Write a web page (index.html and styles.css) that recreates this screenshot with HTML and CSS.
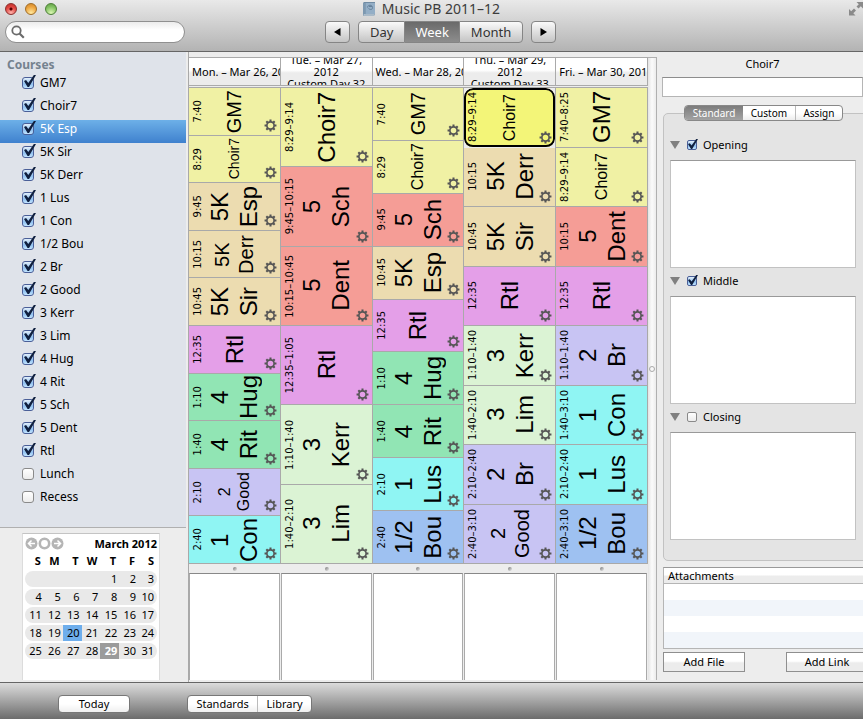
FILE: index.html
```html
<!DOCTYPE html>
<html lang="en">
<head>
<meta charset="utf-8">
<title>Music PB 2011-12</title>
<link rel="stylesheet" href="styles.css">
</head>
<body>
<svg class="defs" aria-hidden="true">
  <symbol id="gear" viewBox="0 0 14 14">
    <g fill="none" stroke="#555">
      <circle cx="7" cy="7" r="3.9" stroke-width="1.8"/>
      <path stroke-width="2.2" d="M7 .6V3M7 11v2.4M.6 7H3M11 7h2.4M2.500 2.500l1.600 1.600M9.900 9.900l1.600 1.600M2.500 11.500l1.600-1.600M9.900 4.100l1.600-1.600"/>
    </g>
  </symbol>
</svg>

<header class="titlebar">
  <div class="title-row">
    <div class="lights">
      <button class="light red" aria-label="Close"></button>
      <button class="light amber" aria-label="Minimize"></button>
      <button class="light green" aria-label="Zoom"></button>
    </div>
    <h1 class="title">
      <svg width="13" height="14" viewBox="0 0 13 14" aria-hidden="true">
        <path fill="#6f8ba3" d="M1 0h11v12l-1 2H0V1z"/>
        <path fill="#93aec6" d="M2.500 1H12v11H2.500z"/>
        <path fill="#7d98b0" d="M0 1h2v12H0z"/>
        <path fill="none" stroke="#64809a" d="M4.500 5.500c0-3 5-3 5 0s-3 2-4 1M6 4.500h3"/>
        <path fill="#e4e9ee" d="M1 12.500h10.500l-.5 1H0z"/>
      </svg>
      Music PB 2011–12
    </h1>
    <button class="fullscreen" aria-label="Full screen">
      <svg width="14" height="15" viewBox="0 0 14 15"><path fill="#8a8a8a" d="M0 14.500V8l2.200 2.200L5 7.500 7 9.500l-2.700 2.700L6.500 14.500zM14 1v6.500l-2.200-2.200L9.500 7.500l-2-2 2.300-2.300L7.500 1z"/></svg>
    </button>
  </div>
  <div class="toolbar">
    <label class="search">
      <svg width="14" height="14" viewBox="0 0 14 14" aria-hidden="true"><circle cx="5.500" cy="5.500" r="4.200" fill="none" stroke="#6b6b6b" stroke-width="1.800"/><path d="M8.500 8.500l4.300 4.300" stroke="#6b6b6b" stroke-width="2.200"/></svg>
      <input type="search" aria-label="Search">
    </label>
    <nav class="nav">
      <button class="tool arrow" aria-label="Previous"><svg width="7" height="8" viewBox="0 0 7 8"><path d="M6.500 0v8L0 4z"/></svg></button>
      <div class="segments">
        <button class="tool">Day</button><button class="tool on">Week</button><button class="tool">Month</button>
      </div>
      <button class="tool arrow" aria-label="Next"><svg width="7" height="8" viewBox="0 0 7 8"><path d="M.5 0v8L7 4z"/></svg></button>
    </nav>
  </div>
</header>

<main class="main">
  <aside class="sidebar">
    <section class="courses">
      <h2>Courses</h2>
      <ul>
        <li><label><input type="checkbox" checked>GM7</label></li>
        <li><label><input type="checkbox" checked>Choir7</label></li>
        <li class="current"><label><input type="checkbox" checked>5K Esp</label></li>
        <li><label><input type="checkbox" checked>5K Sir</label></li>
        <li><label><input type="checkbox" checked>5K Derr</label></li>
        <li><label><input type="checkbox" checked>1 Lus</label></li>
        <li><label><input type="checkbox" checked>1 Con</label></li>
        <li><label><input type="checkbox" checked>1/2 Bou</label></li>
        <li><label><input type="checkbox" checked>2 Br</label></li>
        <li><label><input type="checkbox" checked>2 Good</label></li>
        <li><label><input type="checkbox" checked>3 Kerr</label></li>
        <li><label><input type="checkbox" checked>3 Lim</label></li>
        <li><label><input type="checkbox" checked>4 Hug</label></li>
        <li><label><input type="checkbox" checked>4 Rit</label></li>
        <li><label><input type="checkbox" checked>5 Sch</label></li>
        <li><label><input type="checkbox" checked>5 Dent</label></li>
        <li><label><input type="checkbox" checked>Rtl</label></li>
        <li><label><input type="checkbox">Lunch</label></li>
        <li><label><input type="checkbox">Recess</label></li>
      </ul>
    </section>
    <section class="mini">
      <div class="mini-head">
        <div class="mini-nav">
          <button aria-label="Previous month"><svg width="13" height="13" viewBox="0 0 13 13"><circle cx="6.500" cy="6.500" r="6" fill="#b5b5b5"/><path d="M10 6.500H4M6.500 3.500l-3 3 3 3" fill="none" stroke="#fff" stroke-width="1.500"/></svg></button>
          <button aria-label="Current month"><svg width="13" height="13" viewBox="0 0 13 13"><circle cx="6.500" cy="6.500" r="4.700" fill="#fff" stroke="#b5b5b5" stroke-width="2.600"/></svg></button>
          <button aria-label="Next month"><svg width="13" height="13" viewBox="0 0 13 13"><circle cx="6.500" cy="6.500" r="6" fill="#b5b5b5"/><path d="M3 6.500h6M6.500 3.500l3 3-3 3" fill="none" stroke="#fff" stroke-width="1.500"/></svg></button>
        </div>
        <strong>March 2012</strong>
      </div>
      <table>
        <thead><tr><th>S</th><th>M</th><th>T</th><th>W</th><th>T</th><th>F</th><th>S</th></tr></thead>
        <tbody>
          <tr><td></td><td></td><td></td><td></td><td>1</td><td>2</td><td>3</td></tr>
          <tr><td>4</td><td>5</td><td>6</td><td>7</td><td>8</td><td>9</td><td>10</td></tr>
          <tr><td>11</td><td>12</td><td>13</td><td>14</td><td>15</td><td>16</td><td>17</td></tr>
          <tr><td>18</td><td>19</td><td class="today">20</td><td>21</td><td>22</td><td>23</td><td>24</td></tr>
          <tr><td>25</td><td>26</td><td>27</td><td>28</td><td class="picked">29</td><td>30</td><td>31</td></tr>
        </tbody>
      </table>
    </section>
  </aside>

  <section class="week">
    <div class="day">
      <h3>Mon. – Mar 26, 2012</h3>
      <div class="events">
        <article class="event yellow"><time>7:40</time><p class="md">GM7</p><button aria-label="Options"><svg><use href="#gear"/></svg></button></article>
        <article class="event yellow"><time>8:29</time><p class="xs">Choir7</p><button aria-label="Options"><svg><use href="#gear"/></svg></button></article>
        <article class="event tan"><time>9:45</time><p>5K<br>Esp</p><button aria-label="Options"><svg><use href="#gear"/></svg></button></article>
        <article class="event tan"><time>10:15</time><p class="md">5K<br>Derr</p><button aria-label="Options"><svg><use href="#gear"/></svg></button></article>
        <article class="event tan"><time>10:45</time><p>5K<br>Sir</p><button aria-label="Options"><svg><use href="#gear"/></svg></button></article>
        <article class="event purple"><time>12:35</time><p>Rtl</p><button aria-label="Options"><svg><use href="#gear"/></svg></button></article>
        <article class="event green"><time>1:10</time><p>4<br>Hug</p><button aria-label="Options"><svg><use href="#gear"/></svg></button></article>
        <article class="event green"><time>1:40</time><p>4<br>Rit</p><button aria-label="Options"><svg><use href="#gear"/></svg></button></article>
        <article class="event lavender"><time>2:10</time><p class="sm">2<br>Good</p><button aria-label="Options"><svg><use href="#gear"/></svg></button></article>
        <article class="event cyan"><time>2:40</time><p>1<br>Con</p><button aria-label="Options"><svg><use href="#gear"/></svg></button></article>
      </div>
      <div class="grip"></div>
      <div class="notes"></div>
    </div>
    <div class="day">
      <h3 class="wrap">Tue. – Mar 27,<br>2012<br>Custom Day 32</h3>
      <div class="events">
        <article class="event yellow"><time>8:29–9:14</time><p>Choir7</p><button aria-label="Options"><svg><use href="#gear"/></svg></button></article>
        <article class="event red"><time>9:45–10:15</time><p>5<br>Sch</p><button aria-label="Options"><svg><use href="#gear"/></svg></button></article>
        <article class="event red"><time>10:15–10:45</time><p>5<br>Dent</p><button aria-label="Options"><svg><use href="#gear"/></svg></button></article>
        <article class="event purple"><time>12:35–1:05</time><p>Rtl</p><button aria-label="Options"><svg><use href="#gear"/></svg></button></article>
        <article class="event mint"><time>1:10–1:40</time><p>3<br>Kerr</p><button aria-label="Options"><svg><use href="#gear"/></svg></button></article>
        <article class="event mint"><time>1:40–2:10</time><p>3<br>Lim</p><button aria-label="Options"><svg><use href="#gear"/></svg></button></article>
      </div>
      <div class="grip"></div>
      <div class="notes"></div>
    </div>
    <div class="day">
      <h3>Wed. – Mar 28, 2012</h3>
      <div class="events">
        <article class="event yellow"><time>7:40</time><p class="md">GM7</p><button aria-label="Options"><svg><use href="#gear"/></svg></button></article>
        <article class="event yellow"><time>8:29</time><p class="sm">Choir7</p><button aria-label="Options"><svg><use href="#gear"/></svg></button></article>
        <article class="event red"><time>9:45</time><p>5<br>Sch</p><button aria-label="Options"><svg><use href="#gear"/></svg></button></article>
        <article class="event tan"><time>10:45</time><p>5K<br>Esp</p><button aria-label="Options"><svg><use href="#gear"/></svg></button></article>
        <article class="event purple"><time>12:35</time><p>Rtl</p><button aria-label="Options"><svg><use href="#gear"/></svg></button></article>
        <article class="event green"><time>1:10</time><p>4<br>Hug</p><button aria-label="Options"><svg><use href="#gear"/></svg></button></article>
        <article class="event green"><time>1:40</time><p>4<br>Rit</p><button aria-label="Options"><svg><use href="#gear"/></svg></button></article>
        <article class="event cyan"><time>2:10</time><p>1<br>Lus</p><button aria-label="Options"><svg><use href="#gear"/></svg></button></article>
        <article class="event blue"><time>2:40</time><p>1/2<br>Bou</p><button aria-label="Options"><svg><use href="#gear"/></svg></button></article>
      </div>
      <div class="grip"></div>
      <div class="notes"></div>
    </div>
    <div class="day">
      <h3 class="wrap">Thu. – Mar 29,<br>2012<br>Custom Day 33</h3>
      <div class="events">
        <article class="event yellow selected"><time>8:29–9:14</time><p class="sm">Choir7</p><button aria-label="Options"><svg><use href="#gear"/></svg></button></article>
        <article class="event tan"><time>10:15</time><p>5K<br>Derr</p><button aria-label="Options"><svg><use href="#gear"/></svg></button></article>
        <article class="event tan"><time>10:45</time><p>5K<br>Sir</p><button aria-label="Options"><svg><use href="#gear"/></svg></button></article>
        <article class="event purple"><time>12:35</time><p>Rtl</p><button aria-label="Options"><svg><use href="#gear"/></svg></button></article>
        <article class="event mint"><time>1:10–1:40</time><p>3<br>Kerr</p><button aria-label="Options"><svg><use href="#gear"/></svg></button></article>
        <article class="event mint"><time>1:40–2:10</time><p>3<br>Lim</p><button aria-label="Options"><svg><use href="#gear"/></svg></button></article>
        <article class="event lavender"><time>2:10–2:40</time><p>2<br>Br</p><button aria-label="Options"><svg><use href="#gear"/></svg></button></article>
        <article class="event lavender"><time>2:40–3:10</time><p class="md">2<br>Good</p><button aria-label="Options"><svg><use href="#gear"/></svg></button></article>
      </div>
      <div class="grip"></div>
      <div class="notes"></div>
    </div>
    <div class="day">
      <h3>Fri. – Mar 30, 2012</h3>
      <div class="events">
        <article class="event yellow"><time>7:40–8:25</time><p>GM7</p><button aria-label="Options"><svg><use href="#gear"/></svg></button></article>
        <article class="event yellow"><time>8:29–9:14</time><p class="sm">Choir7</p><button aria-label="Options"><svg><use href="#gear"/></svg></button></article>
        <article class="event red"><time>10:15</time><p>5<br>Dent</p><button aria-label="Options"><svg><use href="#gear"/></svg></button></article>
        <article class="event purple"><time>12:35</time><p>Rtl</p><button aria-label="Options"><svg><use href="#gear"/></svg></button></article>
        <article class="event lavender"><time>1:10–1:40</time><p>2<br>Br</p><button aria-label="Options"><svg><use href="#gear"/></svg></button></article>
        <article class="event cyan"><time>1:40–3:10</time><p>1<br>Con</p><button aria-label="Options"><svg><use href="#gear"/></svg></button></article>
        <article class="event cyan"><time>2:10–2:40</time><p>1<br>Lus</p><button aria-label="Options"><svg><use href="#gear"/></svg></button></article>
        <article class="event blue"><time>2:40–3:10</time><p>1/2<br>Bou</p><button aria-label="Options"><svg><use href="#gear"/></svg></button></article>
      </div>
      <div class="grip"></div>
      <div class="notes"></div>
    </div>
  </section>

  <div class="splitter"></div>

  <aside class="inspector">
    <h2>Choir7</h2>
    <input class="field" type="text" aria-label="Lesson title">
    <section class="group">
      <div class="tabs">
        <button class="on">Standard</button><button>Custom</button><button>Assign</button>
      </div>
      <div class="part">
        <div class="part-head"><span class="tri"></span><label><input type="checkbox" checked>Opening</label></div>
        <textarea aria-label="Opening text"></textarea>
      </div>
      <div class="part">
        <div class="part-head"><span class="tri"></span><label><input type="checkbox" checked>Middle</label></div>
        <textarea aria-label="Middle text"></textarea>
      </div>
      <div class="part">
        <div class="part-head"><span class="tri"></span><label><input type="checkbox">Closing</label></div>
        <textarea aria-label="Closing text"></textarea>
      </div>
    </section>
    <table class="attachments">
      <thead><tr><th>Attachments</th></tr></thead>
      <tbody><tr><td></td></tr><tr><td></td></tr><tr><td></td></tr><tr><td></td></tr></tbody>
    </table>
    <div class="actions"><button>Add File</button><button>Add Link</button></div>
  </aside>
</main>

<footer class="bottombar">
  <button class="pill">Today</button>
  <div class="pair"><button>Standards</button><button>Library</button></div>
</footer>
</body>
</html>
```

FILE: styles.css
```css
* { box-sizing: border-box; }

html, body { height: 100%; }

body {
  margin: 0;
  display: flex;
  flex-direction: column;
  overflow: hidden;
  background: #ededed;
  color: #000;
  font: 12px/16px "Noto Sans", "Open Sans", sans-serif;
}

h1, h2, h3, p, ul { margin: 0; padding: 0; font-weight: 400; }
ul { list-style: none; }
button, input, textarea { font: inherit; color: inherit; margin: 0; }
button { padding: 0; border: 0; background: none; }
svg { display: block; }
.defs { position: absolute; width: 0; height: 0; }

/* Title bar */
.titlebar {
  flex: none;
  padding-bottom: 8px;
  border-bottom: 1px solid #666;
  background: linear-gradient(#e9e9e9, #b3b3b3);
}
.title-row {
  display: grid;
  grid-template-columns: 1fr auto 1fr;
  align-items: center;
  height: 21px;
  padding-bottom: 4px;
}
.lights { display: flex; gap: 8px; padding-left: 5px; }
.light {
  width: 12px;
  height: 12px;
  border: 1px solid #7b5a55;
  border-radius: 50%;
}
.light.red { border-color: #8c2f2c; background: radial-gradient(circle at 50% 50%, #5c0000 0 1px, transparent 2px), radial-gradient(circle at 50% 90%, #ffb3ac, #e0443e 60%, #b8302c); }
.light.amber { border-color: #a06c25; background: radial-gradient(circle at 50% 90%, #ffeaa0, #eda43f 60%, #cf862a); }
.light.green { border-color: #4c7f37; background: radial-gradient(circle at 50% 90%, #dcf7b4, #83c263 60%, #5f9c43); }
.title {
  display: flex;
  align-items: center;
  gap: 6px;
  color: #3c3c3c;
  font-size: 14px;
  line-height: 17px;
}
.fullscreen { justify-self: end; }

.toolbar { display: flex; align-items: center; padding-left: 5px; }
.search {
  display: flex;
  align-items: center;
  width: 180px;
  height: 22px;
  padding: 0 8px 0 5px;
  border: 1px solid #909090;
  border-radius: 11px;
  background: linear-gradient(#ececec, #fff 40%);
}
.search input { flex: 1; min-width: 0; border: 0; outline: 0; background: none; }
.nav { display: flex; gap: 8px; margin-left: 140px; }
.segments { display: flex; }
.tool {
  height: 22px;
  padding: 0 11px;
  border: 1px solid #858585;
  background: linear-gradient(#fafafa, #c4c4c4);
  color: #333;
  font-size: 13px;
  line-height: 20px;
}
.arrow { display: grid; place-items: center; width: 25px; padding: 0; border-radius: 4px; }
.segments .tool:first-child { border-radius: 4px 0 0 4px; }
.segments .tool:last-child { border-radius: 0 4px 4px 0; }
.segments .on {
  padding: 0 10px;
  border-width: 1px 0;
  background: linear-gradient(#6a6a6a, #8d8d8d);
  color: #fff;
}

.main { flex: 1; display: flex; min-height: 0; }

/* Check boxes */
input[type="checkbox"] {
  appearance: none;
  flex: none;
  position: relative;
  width: 12px;
  height: 12px;
  border: 1px solid #8a8a8a;
  border-radius: 3px;
  background: linear-gradient(#fff, #ececec);
}
input[type="checkbox"]:checked {
  border-color: #4a5f98;
  background: linear-gradient(#e2effb, #8fc0f0 60%, #c3e5ff);
}
input[type="checkbox"]:checked::after {
  content: "";
  position: absolute;
  left: 1px;
  top: -3px;
  width: 12px;
  height: 12px;
  background: #10203f;
  clip-path: polygon(0 50%, 17% 42%, 36% 66%, 82% 0, 100% 0, 42% 100%, 30% 100%);
}

/* Sidebar */
.sidebar {
  flex: none;
  display: flex;
  flex-direction: column;
  width: 186px;
}
.courses {
  flex: 1;
  border-bottom: 1px solid #b0b0b0;
  background: #dfe3ea;
}
.courses h2 {
  height: 22px;
  padding: 5px 0 0 7px;
  color: #75828f;
  font-size: 12px;
  font-weight: 700;
}
.courses li { height: 23px; padding: 1px 0 0 22px; }
.courses label { display: flex; align-items: center; gap: 6px; line-height: 16px; }
.courses .current { background: linear-gradient(#6db0e8, #3f81ce); color: #fff; }

.mini {
  width: 138px;
  height: 147px;
  margin: 5px 0 2px 22px;
  padding: 2px 2px 0;
  border: 1px solid #dcdcdc;
  border-top: 1px solid #c4c4c4;
  border-bottom: 0;
  background: #fff;
  font-size: 11px;
}
.mini-head { display: flex; justify-content: space-between; align-items: center; height: 15px; }
.mini-nav { display: flex; }
.mini table {
  width: 100%;
  table-layout: fixed;
  border-spacing: 0 2px;
}
.mini th, .mini td { height: 16px; padding: 0 3px 0 0; text-align: right; line-height: 16px; }
.mini td { padding-right: 2px; background: #e9e9e9; }
.mini td:first-child { border-radius: 8px 0 0 8px; }
.mini td:last-child { padding-right: 3px; border-radius: 0 8px 8px 0; }
.mini .today { background: #6eaeec; }
.mini .picked { background: #9b9b9b; color: #fff; font-weight: 700; }

/* Week */
.week {
  flex: 1;
  display: grid;
  grid-template-columns: repeat(5, minmax(0, 1fr));
  min-width: 0;
  margin-left: 2px;
  padding-top: 5px;
  border-left: 1px solid #a9a9a9;
}
.day { display: flex; flex-direction: column; min-height: 0; }
.day h3 {
  flex: none;
  height: 29px;
  padding: 7px 3px 0;
  overflow: hidden;
  border: solid #aaa;
  border-width: 1px 1px 1px 0;
  background: linear-gradient(#fff 45%, #ececec 55%);
  font-size: 11px;
  line-height: 13px;
  white-space: nowrap;
}
.day h3.wrap {
  display: grid;
  align-content: center;
  padding: 0;
  line-height: 12px;
  text-align: center;
}
.events {
  flex: 1;
  display: flex;
  flex-direction: column;
  margin-top: 1px;
  border-top: 1px solid #a9a9a9;
  border-right: 1px solid #a9a9a9;
}
.event {
  flex: 1 1 0;
  min-height: 0;
  display: grid;
  grid-template: minmax(0, 1fr) / minmax(0, 1fr);
  align-items: center;
  border-bottom: 1px solid #a9a9a9;
}
.event > * { grid-area: 1 / 1; }
.event time, .event p { writing-mode: vertical-rl; transform: rotate(180deg); white-space: nowrap; }
.event time {
  justify-self: start;
  margin-left: 3px;
  font: 10px/12px "DejaVu Sans", sans-serif;
}
.event p {
  justify-self: center;
  font: 24px/29px "Liberation Sans", sans-serif;
  text-align: center;
}
.event .md { font-size: 20px; line-height: 24px; }
.event .sm { font-size: 16px; line-height: 19px; }
.event .xs { font-size: 14px; line-height: 17px; }
.event button { place-self: end; margin: 0 3px 3px 0; }
.event button svg { width: 13px; height: 13px; }
.yellow { background: #f0f1a4; }
.tan { background: #ecdcb0; }
.event.red { background: #f59d96; }
.purple { background: #e49fe8; }
.event.green { background: #91e5b4; }
.lavender { background: #c8c4f3; }
.cyan { background: #8ff5f3; }
.mint { background: #dbf3d4; }
.blue { background: #9ec1f1; }
.selected {
  border-bottom-color: transparent;
  border-radius: 9px;
  background: #f3f578 padding-box;
  box-shadow: inset 0 0 0 2px #000;
}

.grip { flex: none; display: grid; place-items: center; height: 9px; }
.grip::before {
  content: "";
  width: 4px;
  height: 4px;
  border-radius: 50%;
  background: linear-gradient(135deg, #777, #eee);
}
.notes {
  flex: none;
  height: 107px;
  margin: 0 1px 2px 0;
  border: 1px solid #aaa;
  border-top-color: #888;
  border-bottom: 0;
  background: #fff;
}

.splitter {
  flex: none;
  display: grid;
  place-items: center;
  width: 9px;
  margin: 5px 0 2px;
  border: 1px solid #b0b0b0;
  border-width: 1px 1px 0 0;
  background: linear-gradient(90deg, #e4e4e4, #fbfbfb 50%, #ececec);
}
.splitter::before {
  content: "";
  width: 4px;
  height: 4px;
  border: 1px solid #aaa;
  border-radius: 50%;
}

/* Inspector */
.inspector {
  flex: none;
  width: 206px;
  padding: 4px 0 0 5px;
  overflow: hidden;
}
.inspector h2 { height: 21px; font-size: 11px; text-align: center; }
.field {
  display: block;
  width: 100%;
  height: 20px;
  border: 1px solid #b5b5b5;
  border-top-color: #8d8d8d;
  background: #fff;
}
.group {
  height: 448px;
  margin: 16px -8px 0 1px;
  border: 1px solid #c2c2c2;
  border-radius: 5px;
  background: #e4e4e4;
}
.tabs {
  display: flex;
  width: 159px;
  height: 16px;
  margin: -9px 0 16px 20px;
  border: 1px solid #888;
  border-radius: 4px;
  background: linear-gradient(#fff 50%, #ededed);
  font-size: 10px;
  line-height: 14px;
  overflow: hidden;
}
.tabs button { flex: 1 1 auto; line-height: 14px; }
.tabs button:last-child { border-left: 1px solid #bbb; }
.tabs .on { background: linear-gradient(#7c7c7c, #a3a3a3); color: #fff; }
.part { padding: 0 14px 5px 6px; }
.part-head { display: flex; align-items: center; gap: 7px; height: 16px; margin-bottom: 7px; }
.part-head label { display: flex; align-items: center; gap: 6px; font-size: 11px; line-height: 16px; }
.part-head input[type="checkbox"] { width: 10px; height: 10px; border-radius: 2px; }
.part-head input[type="checkbox"]:checked::after { left: 0; top: -2px; width: 10px; height: 10px; }
.tri { width: 10px; height: 8px; background: #808080; clip-path: polygon(0 0, 100% 0, 50% 100%); }
.part textarea {
  display: block;
  width: 100%;
  height: 108px;
  border: 1px solid #c2c2c2;
  border-top-color: #999;
  background: #fff;
  resize: none;
}
.attachments {
  width: 208px;
  margin: 6px 0 0 1px;
  border: 1px solid #b5b5b5;
  border-top-color: #999;
  border-spacing: 0;
}
.attachments th {
  height: 16px;
  padding: 0 4px;
  border-bottom: 1px solid #b5b5b5;
  background: linear-gradient(#fff 45%, #ececec 55%);
  font-size: 11px;
  font-weight: 400;
  line-height: 15px;
  text-align: left;
}
.attachments td { height: 16px; padding: 0; background: #fff; }
.attachments tr:nth-child(even) td { background: #f1f5fa; }
.actions { display: flex; gap: 41px; width: 206px; margin: 3px 0 0 1px; }
.actions button {
  flex: none;
  width: 82px;
  height: 20px;
  border: 1px solid #8f8f8f;
  background: linear-gradient(#fff 45%, #ececec 55%);
  font-size: 11px;
  line-height: 18px;
}

/* Bottom bar */
.bottombar {
  flex: none;
  display: flex;
  align-items: center;
  gap: 57px;
  height: 37px;
  padding: 6px 0 0 58px;
  border-top: 1px solid #666;
  background: linear-gradient(#dcdcdc, #6c6c6c);
  font-size: 11px;
}
.pill, .pair {
  height: 18px;
  border: 1px solid #777;
  border-radius: 4px;
  background: linear-gradient(#fff 50%, #efefef);
  line-height: 16px;
}
.pill { width: 72px; }
.pair { display: flex; width: 125px; }
.pair button { flex: 1 1 auto; line-height: 16px; }
.pair button:last-child { border-left: 1px solid #bbb; }
```
